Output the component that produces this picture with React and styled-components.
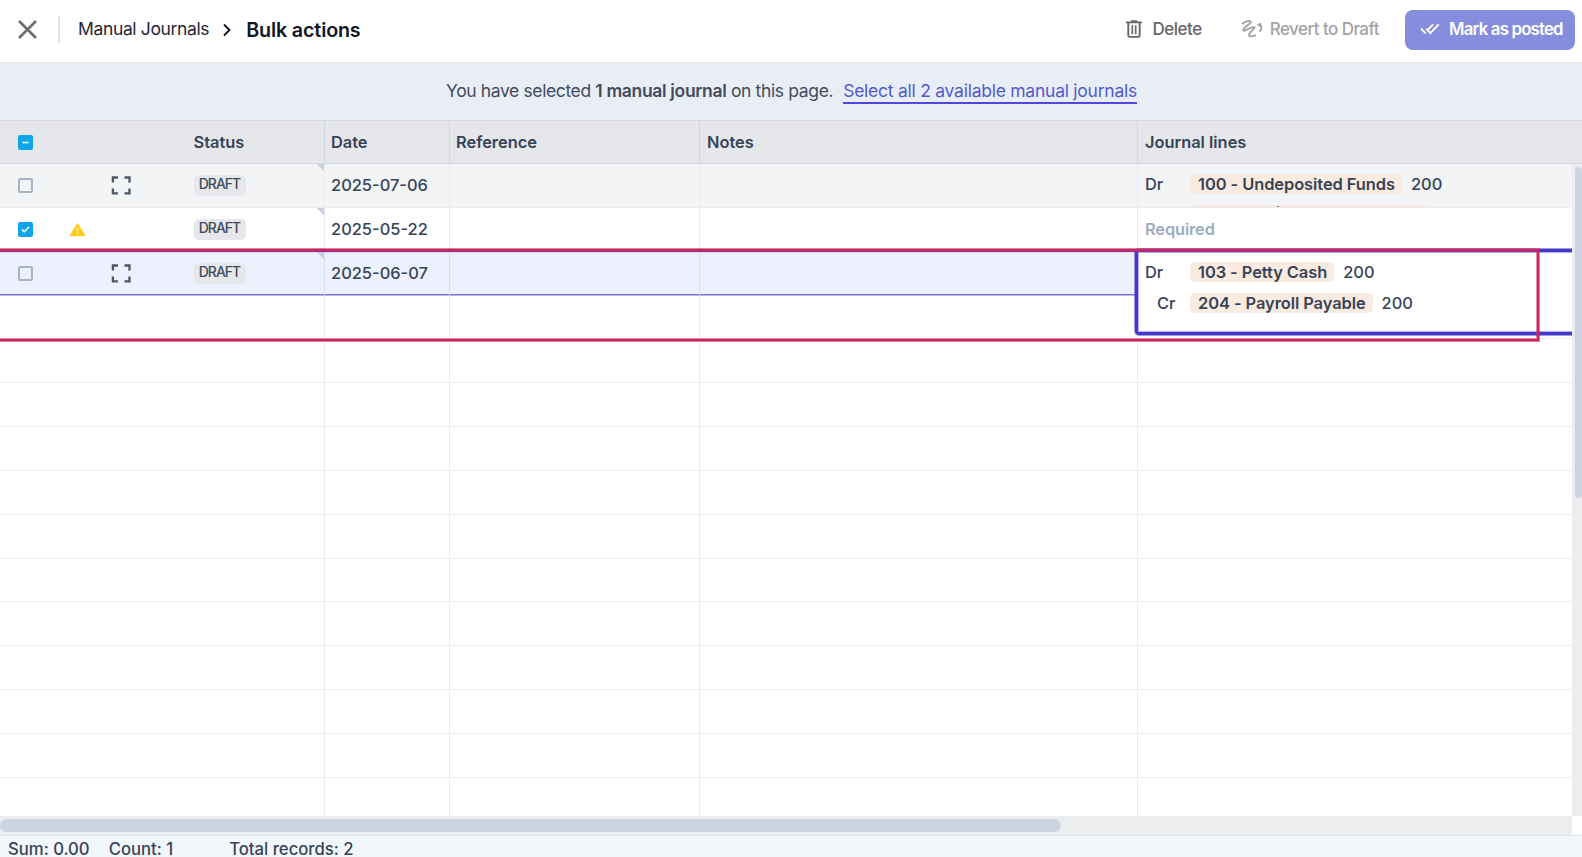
import React from 'react';
import styled, { createGlobalStyle, css } from 'styled-components';

const GlobalStyle = createGlobalStyle`
  * { box-sizing: border-box; }
  html, body { margin: 0; overflow: hidden; }
  body {
    font-family: Inter, "Liberation Sans", sans-serif;
    color: #374357;
    background: #fff;
  }
`;

const COLUMNS = '325px 125px 250px 438px minmax(0, 1fr)';

const Page = styled.div`
  display: flex;
  flex-direction: column;
  width: 100vw;
  height: 100vh;
  overflow: hidden;
  white-space: nowrap;
`;

/* ---------- top bar ---------- */

const TopBar = styled.header`
  display: flex;
  align-items: center;
  justify-content: space-between;
  flex: none;
  height: 63px;
  padding: 0 7px 3px 18px;
  border-bottom: 1px solid #e4e6ea;
`;

const Breadcrumbs = styled.nav`
  display: flex;
  align-items: center;
`;

const CloseIcon = styled.svg`
  width: 19px;
  height: 19px;
`;

const Divider = styled.span`
  width: 2px;
  height: 27px;
  margin: 0 18px 0 21px;
  background: #e1e2e4;
`;

const Crumb = styled.a`
  position: relative;
  top: -1px;
  font-size: 17.5px;
  letter-spacing: -0.36px;
  color: #1f2636;
`;

const ChevronIcon = styled.svg`
  width: 10px;
  height: 14px;
  margin: 0 14px 0 13px;
`;

const CurrentCrumb = styled.h1`
  margin: 0;
  font-size: 19.7px;
  font-weight: 600;
  letter-spacing: -0.15px;
  color: #111524;
`;

const Actions = styled.div`
  display: flex;
  align-items: center;
`;

const TextButton = styled.button`
  display: flex;
  align-items: center;
  gap: ${p => p.$gap}px;
  margin: 0 ${p => p.$after}px 0 0;
  padding: 0 0 1px;
  border: 0;
  background: none;
  font: 500 17px/20px Inter, sans-serif;
  letter-spacing: ${p => p.$tracking}px;
  color: ${p => (p.$muted ? '#a2a3a6' : '#66676b')};
`;

const PrimaryButton = styled.button`
  display: flex;
  align-items: center;
  gap: 9px;
  width: 170px;
  height: 40px;
  padding: 0 0 2px 15px;
  border: 0;
  border-radius: 8px;
  background: #868ddc;
  font: 600 16.8px Inter, sans-serif;
  letter-spacing: -0.8px;
  color: #fff;
`;

/* ---------- selection banner ---------- */

const Banner = styled.div`
  flex: none;
  height: 58px;
  padding-left: 1px;
  border-bottom: 1px solid #d3d8df;
  background: #e9eef6;
  text-align: center;
  font-size: 17.5px;
  line-height: 56px;
  letter-spacing: -0.36px;
  color: #424c5c;

  strong { font-weight: 600; letter-spacing: -0.34px; }
`;

const Lead = styled.span`
  letter-spacing: -0.38px;
`;

const SelectAll = styled.a`
  margin-left: 10px;
  padding-bottom: 1px;
  border-bottom: 2px solid #4f46e5;
  letter-spacing: -0.25px;
  color: #5159cf;
`;

/* ---------- table ---------- */

const HeadRow = styled.div`
  display: grid;
  grid-template-columns: ${COLUMNS};
  flex: none;
  height: 43px;
  border-bottom: 1px solid #d3d6dc;
  background: #e5e7eb;
`;

const HeadCell = styled.div`
  display: flex;
  align-items: center;
  padding: 0 0 0 6px;
  border-right: 1px solid #d3d6dc;
  font-size: 16.4px;
  font-weight: 600;

  &:nth-child(4) { padding-left: 7px; }
  &:last-child { padding-left: 7px; border-right: 0; }
`;

const Viewport = styled.div`
  display: grid;
  grid-template-columns: minmax(0, 1fr) 10px;
  grid-template-rows: 652px 19px;
  flex: none;
`;

const Rows = styled.div`
  position: relative;
  overflow: hidden;
`;

const tones = {
  plain: css`border-color: #ececee;`,
  shaded: css`background: #f2f4f6; border-color: #ececee;`,
  active: css`
    width: 1138px;
    background: #edf1fe;
    border-bottom-color: #b9b6ec;
    box-shadow: 0 -1px #4338ca, inset 0 1px #dcdcfa, inset 0 -1px #7a74da;
  `,
};

const Row = styled.div`
  display: grid;
  grid-template-columns: ${COLUMNS};
  height: 43.85px;
  border-bottom: 1px solid;
  ${p => tones[p.$tone || 'plain']}
`;

const Cell = styled.div`
  display: flex;
  align-items: center;
  min-width: 0;
  padding-left: 6px;
  border-right: 1px solid ${p => (p.$active ? '#d5defb' : '#ececee')};
  font-size: 16.45px;
  font-weight: 500;
  line-height: 20px;

  &:nth-child(5) { padding-left: 7px; border-right: 0; }
`;

const leadGrid = css`
  display: grid;
  grid-template-columns: 51px 42px 82.500px 1fr;
  align-items: center;
  padding-left: 18px;
`;

const LeadHead = styled(HeadCell)`${leadGrid}`;

const LeadCell = styled(Cell)`
  ${leadGrid}
  ${p => p.$flag && css`
    background: linear-gradient(to bottom left, #c9d1df 50%, transparent 50%) top right / 8px 8px no-repeat;
  `}
`;

const Box = styled.span`
  display: flex;
  align-items: center;
  justify-content: center;
  width: 15px;
  height: 15px;
  border: 2px solid ${p => (p.$on ? '#0fa5ea' : '#a9b3c6')};
  border-radius: 2px;
  background: ${p => (p.$on ? '#0fa5ea' : 'transparent')};
`;

const Slot = styled.span`
  display: flex;
  align-items: center;
`;

const Tag = styled.span`
  display: flex;
  justify-content: center;
  width: 52px;
  height: 21px;
  border-radius: 5px;
  background: #e5e7eb;
  font-size: 13.9px;
  line-height: 19px;
  letter-spacing: -0.95px;
  color: #414b5a;
`;

const Placeholder = styled.span`
  font-weight: 600;
  letter-spacing: -0.15px;
  color: #a0abc0;
`;

const JournalLines = styled.div`
  display: flex;
  flex-direction: column;
  align-self: flex-start;
  gap: 11px;
  height: 42.850px;
  padding: 10px 0 0;
  overflow: hidden;
`;

const Line = styled.div`
  display: flex;
  align-items: center;
  flex: none;
  height: 20px;
  font-size: 16.45px;
  font-weight: 500;
`;

const Side = styled.span`
  width: 45px;
  padding-left: ${p => (p.$credit ? 12 : 0)}px;
`;

const Account = styled.span`
  height: 20px;
  margin-right: 9px;
  padding: 0 7px 0 8px;
  border-radius: 5px;
  background: #faebe0;
  font-weight: 600;
  line-height: 20px;
  letter-spacing: -0.07px;
`;

/* Top edge of the next account chip, cut by the row height */
const ChipEdge = styled.div`
  flex: none;
  width: 236px;
  height: 3px;
  margin: -0.500px 0 0 46px;
  padding: 1px 0 0 86px;
  border-radius: 3px 3px 0 0;
  background: #faebe0;

  &::before {
    content: '';
    display: block;
    width: 2px;
    height: 1px;
    background: #6c7079;
  }
`;

/* Expanded cell editor floating over the grid */
const Editor = styled.div`
  position: absolute;
  top: 85px;
  left: 1135px;
  right: -10px;
  height: 86px;
  display: flex;
  flex-direction: column;
  gap: 11px;
  padding: 10px 0 0 7px;
  border: 3px solid #4338ca;
  border-radius: 4px;
  background: #fff;
  box-shadow: 0 0 0 1px rgba(67, 56, 202, 0.5), inset 0 0 0 1px rgba(67, 56, 202, 0.4);
`;

/* Annotation frame drawn over the expanded record */
const Highlight = styled.div`
  position: absolute;
  top: 85px;
  left: -6px;
  width: 1545px;
  height: 92px;
  border: 2px solid #cb265d;
  box-shadow: 0 0 0 1px rgba(203, 38, 93, 0.6), inset 0 0 0 1px rgba(203, 38, 93, 0.5);
  pointer-events: none;
`;

/* ---------- scrollbars and footer ---------- */

const VTrack = styled.div`
  padding: 3px 0 0 3px;
  background: #ebedef;
`;

const VThumb = styled.div`
  height: 331px;
  border-radius: 4px;
  background: #cbd4e0;
`;

const HTrack = styled.div`
  padding-top: 3px;
  background: #ebedef;
`;

const HThumb = styled.div`
  width: 1061px;
  height: 13px;
  border-radius: 7px;
  background: #cbd4e0;
`;

const Footer = styled.footer`
  display: flex;
  flex: 1;
  padding-left: 8px;
  border-top: 1px solid #dfe3ea;
  background: #f2f7fb;
  font-size: 16.7px;
  font-weight: 500;
  line-height: 26px;
`;

const Total = styled.span`
  margin-right: ${p => p.$after || 0}px;
`;

/* ---------- icons ---------- */

const TrashIcon = () => (
  <svg width="16" height="18" viewBox="0 0 16 18" fill="none" stroke="#66676b" strokeWidth="1.9">
    <path d="M0 2.4h16M5 1.2h6M2.3 2.4v13.2q0 1.3 1.3 1.3h8.8q1.3 0 1.3-1.3V2.4" />
    <path d="M6.3 5.2v9M9.7 5.2v9" strokeWidth="1.7" />
  </svg>
);

const ScribbleIcon = () => (
  <svg width="22" height="18" viewBox="0 0 22 18" fill="none" stroke="#a2a3a6" strokeWidth="1.9" strokeLinecap="round" strokeLinejoin="round">
    <path d="M1.5 3.4C4 1.800 8 .6 9.700 1.500 10.900 2.600 3.500 7.200 2.300 9.600c-.5 1.500 1 1.200 2.200.7C7.500 9 12.200 6.200 13.500 7.300 14.300 8.700 8.300 12 8 14.600c-.1 2.500 3.300 1.700 6.200.7" />
    <path d="M18.800 4.500c2.300 1.800 2 4.600.1 6.700" />
    <path d="M19.500 3.400l-3.100 1 2.300 2.200z" strokeWidth="0.8" fill="#a2a3a6" />
  </svg>
);

const DoubleCheckIcon = () => (
  <svg width="20" height="12" viewBox="0 0 20 12" fill="none" stroke="#fff" strokeWidth="1.9">
    <path d="M0.9 5.6l4.800 4.800M6.300 5.600l4 4.600 8.400-8.800M8.100 6.700l5-5.300" />
  </svg>
);

const ExpandIcon = () => (
  <svg width="20" height="19" viewBox="0 0 20 19" fill="none" stroke="#4c5667" strokeWidth="2.3">
    <path d="M1.900 6.400V1.500h5M13.500 1.500h5v4.900M18.500 12.400v5h-5M6.900 17.400h-5v-5" />
  </svg>
);

const WarningIcon = () => (
  <svg width="18" height="15" viewBox="0 0 18 15">
    <path d="M8.500 1.400L15.900 13.700H1.100z" fill="#ffca1a" stroke="#ffca1a" strokeLinejoin="round" />
    <path d="M8.500 5.800v3.600M8.500 10.600v1.500" stroke="#fff3c4" strokeWidth="1.500" />
  </svg>
);

const TickIcon = () => (
  <svg width="9" height="7" viewBox="0 0 9 7" fill="none" stroke="#fff" strokeWidth="1.6">
    <path d="M1 3.500l2.300 2.200L8 1" />
  </svg>
);

const DashIcon = () => (
  <svg width="7" height="3" viewBox="0 0 7 3">
    <path d="M0.500 1.500h6" stroke="#fff" strokeWidth="1.6" />
  </svg>
);

/* ---------- data ---------- */

const records = [
  {
    date: '2025-07-06',
    tone: 'shaded',
    lines: [{ side: 'Dr', account: '100 - Undeposited Funds', amount: '200' }],
  },
  { date: '2025-05-22', checked: true, warning: true },
  { date: '2025-06-07', tone: 'active' },
];

const editedLines = [
  { side: 'Dr', account: '103 - Petty Cash', amount: '200' },
  { side: 'Cr', account: '204 - Payroll Payable', amount: '200' },
];

const JournalLine = ({ side, account, amount }) => (
  <Line>
    <Side $credit={side === 'Cr'}>{side}</Side>
    <Account>{account}</Account>
    <span>{amount}</span>
  </Line>
);

const Record = ({ record }) => {
  const active = record.tone === 'active';
  return (
    <Row $tone={record.tone}>
      <LeadCell $flag $active={active}>
        <Box $on={record.checked}>{record.checked && <TickIcon />}</Box>
        <Slot>{record.warning && <WarningIcon />}</Slot>
        <Slot>{!record.warning && <ExpandIcon />}</Slot>
        <Tag>DRAFT</Tag>
      </LeadCell>
      <Cell $active={active}>{record.date}</Cell>
      <Cell $active={active} />
      <Cell $active={active} />
      {!active && (
        <Cell>
          {record.lines ? (
            <JournalLines>
              {record.lines.map(l => <JournalLine key={l.side} {...l} />)}
              <ChipEdge />
            </JournalLines>
          ) : (
            <Placeholder>Required</Placeholder>
          )}
        </Cell>
      )}
    </Row>
  );
};

const EmptyRow = () => (
  <Row>
    <Cell /><Cell /><Cell /><Cell /><Cell />
  </Row>
);

export default function App() {
  return (
    <Page>
      <GlobalStyle />
      <TopBar>
        <Breadcrumbs>
          <CloseIcon viewBox="0 0 19 19" fill="none" stroke="#6b6c70" strokeWidth="2.6">
            <path d="M1 1l17 17M18 1L1 18" />
          </CloseIcon>
          <Divider />
          <Crumb>Manual Journals</Crumb>
          <ChevronIcon viewBox="0 0 10 14" fill="none" stroke="#111524" strokeWidth="1.9">
            <path d="M2 1.500L7.500 7 2 12.500" />
          </ChevronIcon>
          <CurrentCrumb>Bulk actions</CurrentCrumb>
        </Breadcrumbs>
        <Actions>
          <TextButton $gap={11} $after={39} $tracking={-0.5}><TrashIcon />Delete</TextButton>
          <TextButton $gap={7} $after={26} $tracking={-0.55} $muted><ScribbleIcon />Revert to Draft</TextButton>
          <PrimaryButton><DoubleCheckIcon />Mark as posted</PrimaryButton>
        </Actions>
      </TopBar>

      <Banner>
        <Lead>You have selected </Lead>
        <strong>1 manual journal</strong> on this page.
        <SelectAll>Select all 2 available manual journals</SelectAll>
      </Banner>

      <HeadRow>
        <LeadHead>
          <Box $on><DashIcon /></Box>
          <Slot />
          <Slot />
          <span>Status</span>
        </LeadHead>
        <HeadCell>Date</HeadCell>
        <HeadCell>Reference</HeadCell>
        <HeadCell>Notes</HeadCell>
        <HeadCell>Journal lines</HeadCell>
      </HeadRow>

      <Viewport>
        <Rows>
          {records.map(r => <Record key={r.date} record={r} />)}
          {Array.from({ length: 12 }, (_, i) => <EmptyRow key={i} />)}
          <Editor>{editedLines.map(l => <JournalLine key={l.side} {...l} />)}</Editor>
          <Highlight />
        </Rows>
        <VTrack><VThumb /></VTrack>
        <HTrack><HThumb /></HTrack>
      </Viewport>

      <Footer>
        <Total $after={19}>Sum: 0.00</Total>
        <Total $after={56}>Count: 1</Total>
        <Total>Total records: 2</Total>
      </Footer>
    </Page>
  );
}
